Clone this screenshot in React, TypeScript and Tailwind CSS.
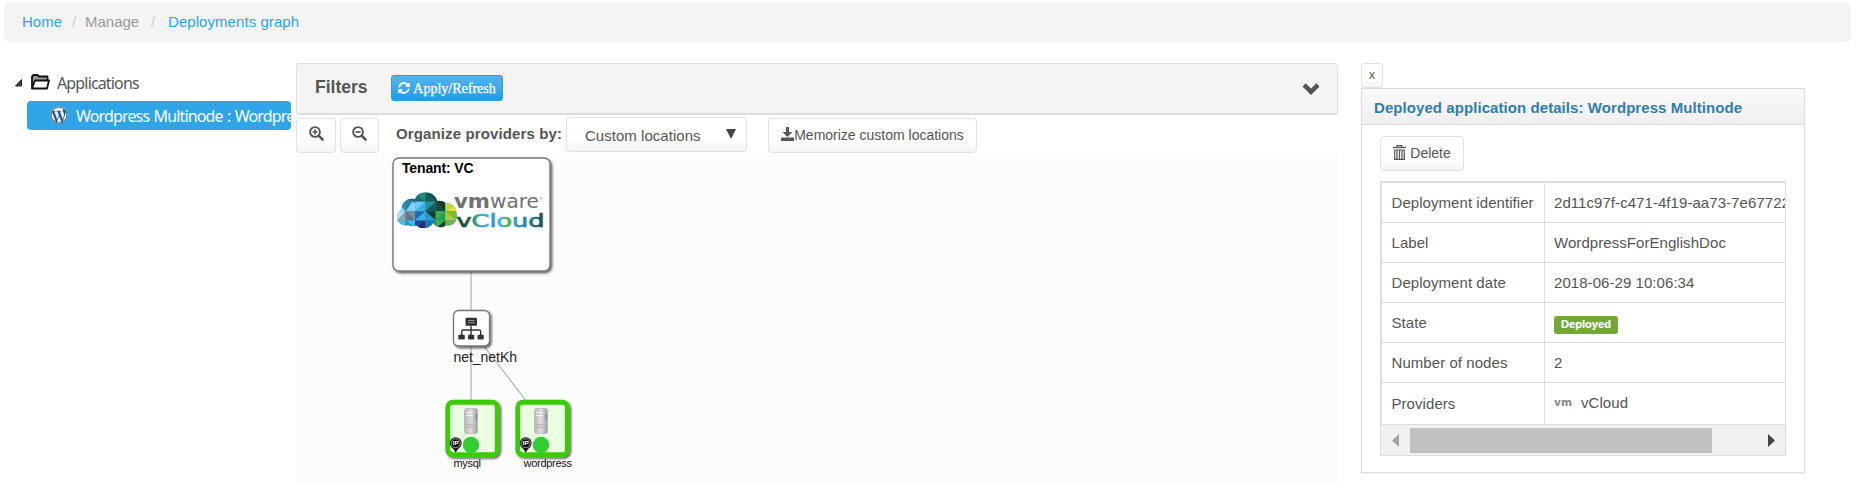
import React, { type ReactNode } from "react";
import { FaWordpress, FaSyncAlt } from "react-icons/fa";

const button =
  "flex items-center justify-center rounded border border-[#e2e2e2] bg-linear-to-b from-white from-60% to-[#f4f4f4] text-[#555]";

function Breadcrumb() {
  return (
    <nav className="ml-1 flex h-10 w-[1847px] items-center rounded-[5px] bg-[#f4f4f4] pl-[18px] text-[15px] leading-5 text-[#999]">
      <span className="w-[50px] text-[#2fa4e7]">Home</span>
      <span className="w-[13px] text-[#ccc]">/</span>
      <span className="w-[66px]">Manage</span>
      <span className="w-[17px] text-[#ccc]">/</span>
      <span className="tracking-[0.06px] text-[#2fa4e7]">Deployments graph</span>
    </nav>
  );
}

function Tree() {
  return (
    <aside className="w-[296px] shrink-0 pt-[9px] font-['Noto_Sans','Open_Sans',sans-serif] text-[16px]">
      <div className="flex h-[22px] items-center pl-[15px] text-[#555]">
        <svg className="mr-[9px] h-2 w-[7px]" viewBox="0 0 7 8">
          <path d="M6.500 .5V7H.5z" fill="#444" stroke="#222" />
        </svg>
        <svg className="mr-[7px] -mt-[2px] h-4 w-[19px]" viewBox="0 0 19 16">
          <path d="M1 14V2.500L2.500 1h4L8 2.500h8.500V6" fill="#999" stroke="#111" strokeWidth="1.800" strokeLinejoin="round" />
          <path d="M1 14.500L4 6.500h14L16 14.500z" fill="#fff" stroke="#111" strokeWidth="1.800" strokeLinejoin="round" />
        </svg>
        <span className="tracking-[-0.85px]">Applications</span>
      </div>
      <div className="ml-[27px] mt-[7px] flex h-[29px] w-[264px] items-center overflow-hidden rounded bg-[#2fa4e7] pl-[23px] whitespace-nowrap text-white">
        <span className="mr-2 mb-[2px] flex h-[18px] w-[18px] shrink-0 items-center justify-center rounded-full bg-[#21597d]">
          <FaWordpress className="h-[18px] w-[18px] text-[#e8f0f5]" />
        </span>
        <span className="tracking-[-0.85px] [word-spacing:1px]">Wordpress Multinode : WordpressForEnglishDoc</span>
      </div>
    </aside>
  );
}

function Magnifier({ plus }: { plus?: boolean }) {
  return (
    <svg className="mb-1 h-[15px] w-[15px]" viewBox="0 0 15 15" fill="none" stroke="#555">
      <circle cx="6" cy="6" r="4.900" strokeWidth="1.900" />
      <path d="M9.700 9.700L13.500 13.500" strokeWidth="2.600" strokeLinecap="round" />
      <path d={plus ? "M3.500 6h5M6 3.500v5" : "M3.500 6h5"} strokeWidth="1.700" />
    </svg>
  );
}

function Filters() {
  return (
    <div className="flex h-[52px] items-center rounded border border-b-2 border-[#ddd] bg-[#f4f4f4] pl-[18px]">
      <h4 className="w-[76px] pb-[3px] text-[17.5px] font-bold text-[#555]">Filters</h4>
      <button className="mb-[1px] flex h-[26px] w-[112px] items-center justify-center gap-[3px] rounded-[3px] border border-[#2a9ddf] bg-linear-to-b from-[#54b4eb] to-[#1d9ce5] font-['Liberation_Serif',serif] text-[14px] text-white [-webkit-text-stroke:0.25px_white]">
        <FaSyncAlt className="h-3 w-3" />
        Apply/Refresh
      </button>
      <svg className="mr-[17px] ml-auto h-3 w-[18px]" viewBox="0 0 18 12">
        <path d="M.5 3.500L3.700 .3 9 5.400 14.300 .3 17.500 3.500 9 12z" fill="#555" />
      </svg>
    </div>
  );
}

function Toolbar() {
  return (
    <div className="flex h-[38px] pt-[2px] text-[15px] text-[#555]">
      <button className={`${button} mt-[1px] h-[35px] w-10`}><Magnifier plus /></button>
      <button className={`${button} mt-[1px] ml-1 h-[35px] w-[39px]`}><Magnifier /></button>
      <label className="ml-[17px] w-[170px] pt-[7px] leading-5 font-bold tracking-[0.12px] whitespace-nowrap">Organize providers by:</label>
      <div className="flex h-[35px] w-[181px] items-center justify-between rounded border border-[#e2e2e2] bg-linear-to-b from-white from-60% to-[#f4f4f4] pt-[3px] pr-2.5 pl-[18px] tracking-[0.03px]">
        Custom locations
        <svg className="mb-[5px] h-2.5 w-2.5" viewBox="0 0 10 10"><path d="M0 0h10L5 10z" fill="#444" /></svg>
      </div>
      <button className={`${button} mt-[1px] ml-[21px] h-[35px] w-[209px] text-[14px] whitespace-nowrap`}>
        <svg className="mb-1 h-[14px] w-[13px]" viewBox="0 0 13 14">
          <path d="M5 0h3v5h3.500L6.500 10 1.500 5H5zM0 10.500h13V14H0z" fill="#555" />
        </svg>
        <span>Memorize custom locations</span>
      </button>
    </div>
  );
}

const facets: [string, string][] = [
  ["13,52 40,52 40,80", "#2f8fb5"], ["13,52 13,80 40,80", "#8fd3f5"],
  ["40,35 67,52 40,80", "#2b7fa6"], ["67,40 67,80 40,80", "#7fd0fb"], ["40,38 70,38 67,56", "#256b83"],
  ["67,23 97,23 97,52", "#1e8a80"], ["67,23 67,52 97,52", "#1d6f70"], ["97,20 97,52 127,52", "#1b5f58"], ["97,20 130,20 127,52", "#174b47"],
  ["67,52 97,52 67,80", "#6cc8f8"], ["97,52 97,80 67,80", "#3eaee9"],
  ["97,52 127,52 97,80", "#2393a0"], ["127,52 127,80 97,80", "#0f5f5d"],
  ["127,38 155,38 155,60", "#216747"], ["127,38 127,80 155,80", "#1d4a3a"], ["127,45 155,52 155,80", "#16392f"],
  ["155,52 190,52 155,80", "#c6dc38"], ["190,52 190,80 155,80", "#d7e43a"],
  ["13,80 40,80 13,110", "#b5dff5"], ["40,80 40,110 13,110", "#88a4b4"],
  ["40,80 67,80 67,108", "#798d9b"], ["40,80 40,110 67,108", "#5f7482"],
  ["67,80 97,80 67,108", "#1870b4"], ["97,80 97,108 67,108", "#3bb0e8"],
  ["97,80 127,80 127,108", "#144033"], ["97,80 97,108 127,108", "#2897d1"],
  ["127,80 155,80 127,108", "#3eae45"], ["155,80 155,108 127,108", "#1fa351"],
  ["155,80 190,80 190,108", "#6dc144"], ["155,80 155,108 190,108", "#a7cc36"],
  ["13,110 40,110 40,132", "#4fbdf1"], ["40,108 67,108 67,132", "#46b6ee"], ["40,108 40,132 67,132", "#218bc5"],
  ["67,108 97,108 67,132", "#1b4c94"], ["97,108 97,132 67,132", "#35206b"],
  ["97,108 127,108 97,132", "#1778b6"], ["127,108 127,132 97,132", "#197c7d"],
  ["127,108 155,108 127,132", "#49ae3c"], ["155,108 155,132 127,132", "#183e34"],
  ["155,108 190,108 155,132", "#6fb83e"],
];

function VCloudLogo() {
  return (
    <g>
      <g transform="translate(392 184.500) scale(.344 .3333)">
        <clipPath id="cloud">
          <circle cx="39" cy="98" r="25" />
          <circle cx="57" cy="72" r="29" />
          <circle cx="98" cy="57" r="34" />
          <circle cx="138" cy="76" r="27" />
          <circle cx="162" cy="82" r="25" />
          <circle cx="163" cy="97" r="26" />
          <circle cx="142" cy="103" r="25" />
          <circle cx="92" cy="99" r="32" />
          <circle cx="60" cy="99" r="26" />
        </clipPath>
        <g clipPath="url(#cloud)">
          <rect x="10" y="20" width="180" height="115" fill="#2b91b8" />
          {facets.map(([points, fill]) => (
            <polygon key={points} points={points} fill={fill} />
          ))}
        </g>
      </g>
      <g fontFamily="DejaVu Sans, sans-serif" fontSize="20">
        <text x="454" y="208" textLength="36" lengthAdjust="spacingAndGlyphs" fontWeight="bold" fill="#717074">vm</text>
        <text x="490" y="208" textLength="49" lengthAdjust="spacingAndGlyphs" fill="#717074">ware</text>
        <circle cx="541" cy="198" r=".8" fill="#717074" />
        <text x="456.500" y="226.500" fontSize="18" textLength="88" lengthAdjust="spacingAndGlyphs" fill="url(#wordmark)" stroke="url(#wordmark)" strokeWidth=".7">vCloud</text>
      </g>
    </g>
  );
}

function NetworkNode() {
  return (
    <g>
      <rect x="453.500" y="310.500" width="36" height="35.500" rx="5" fill="#fff" stroke="#777" strokeWidth="1.300" filter="url(#shadow)" />
      <g fill="#333">
        <rect x="465.500" y="317.700" width="11.500" height="8" rx="1" />
        <path d="M468 320.500h6.500M468 322.700h6.500" stroke="#aaa" strokeWidth=".8" />
        <path d="M471 325.500v10M461.700 335v-3.500q0-1.500 1.500-1.500h16q1.500 0 1.500 1.500v3.500" fill="none" stroke="#333" strokeWidth="1.400" />
        <rect x="458.300" y="334.800" width="6.500" height="4.800" rx="1" />
        <rect x="468" y="334.800" width="6.300" height="4.800" rx="1" />
        <rect x="477.500" y="334.800" width="6.300" height="4.800" rx="1" />
      </g>
    </g>
  );
}

function ServerNode({ x, label, labelWidth }: { x: number; label: string; labelWidth: number }) {
  return (
    <g transform={`translate(${x} 400)`}>
      <rect x="2.250" y="2.250" width="49.500" height="52.500" rx="5" fill="#eaffe2" stroke="#3bcc04" strokeWidth="4.800" filter="url(#shadow)" />
      <rect x="19" y="8.500" width="13" height="25" rx="2" fill="url(#server)" stroke="#aaa" strokeWidth=".6" />
      <path d="M20.500 12.500h7M20.500 15.500h7" stroke="#f4f4f4" strokeWidth="1" />
      <path d="M20.500 24.500h7M20.500 27h7" stroke="#999" strokeWidth=".6" />
      <path d="M30.800 14v6" stroke="#5b8fd6" strokeWidth="1.200" />
      <path d="M10.200 52.500Q8.500 49 5.900 47.300A5.900 5.900 0 1 1 14.500 47.300Q11.900 49 10.200 52.500z" fill="#111" />
      <circle cx="10.200" cy="43.200" r="4.500" fill="#111" stroke="#ccc" strokeWidth=".7" />
      <text x="7.300" y="45.400" fontSize="6.200" fontWeight="bold" fill="#fff">IP</text>
      <circle cx="25.500" cy="45" r="8.200" fill="#3c3" />
      <text x="8" y="67" fontSize="11" fill="#111" textLength={labelWidth}>{label}</text>
    </g>
  );
}

function Graph() {
  return (
    <svg className="block h-[333px] w-[1042px] bg-[#fcfcfc]" viewBox="296 153 1042 333" fontFamily="Liberation Sans, Arial, sans-serif">
      <defs>
        <filter id="shadow" x="-20%" y="-20%" width="150%" height="150%">
          <feDropShadow dx="1.500" dy="1.500" stdDeviation="1.300" floodColor="#000" floodOpacity=".65" />
        </filter>
        <linearGradient id="server">
          <stop offset="0" stopColor="#b8b8b8" />
          <stop offset=".5" stopColor="#dedede" />
          <stop offset="1" stopColor="#a0a0a0" />
        </linearGradient>
        <linearGradient id="wordmark" gradientUnits="userSpaceOnUse" x1="457" y1="0" x2="543" y2="0">
          <stop offset="0" stopColor="#1c4038" />
          <stop offset=".14" stopColor="#1f5a50" />
          <stop offset=".2" stopColor="#2f9c62" />
          <stop offset=".28" stopColor="#3aa8dc" />
          <stop offset=".42" stopColor="#2f9ad8" />
          <stop offset=".5" stopColor="#49b4e6" />
          <stop offset=".58" stopColor="#53b648" />
          <stop offset=".66" stopColor="#36a3a5" />
          <stop offset=".75" stopColor="#2b8fc0" />
          <stop offset=".88" stopColor="#1e7480" />
          <stop offset="1" stopColor="#1b5050" />
        </linearGradient>
      </defs>
      <path d="M471 271V310M471 346V400M484 346L525.500 400" stroke="#aaa" strokeWidth="1.100" fill="none" />
      <rect x="393" y="158" width="157" height="113" rx="6" fill="#fff" stroke="#777" strokeWidth="1.400" filter="url(#shadow)" />
      <text x="402" y="173" fontSize="14" fontWeight="bold" fill="#000" textLength="71.500">Tenant: VC</text>
      <VCloudLogo />
      <NetworkNode />
      <text x="453.500" y="362" fontSize="14" fill="#222" textLength="63.500">net_netKh</text>
      <ServerNode x={445.5} label="mysql" labelWidth={27.5} />
      <ServerNode x={515.5} label="wordpress" labelWidth={48.5} />
    </svg>
  );
}

function Row({ label, children, className = "h-10" }: { label: string; children: ReactNode; className?: string }) {
  return (
    <div className={`flex border-b border-[#ddd] ${className}`}>
      <div className="flex w-[163px] shrink-0 items-center border-r border-[#ddd] pt-[2px] pl-[9.5px]">{label}</div>
      <div className="flex min-w-0 flex-1 items-center overflow-hidden pt-[2px] pl-[9px]">{children}</div>
    </div>
  );
}

function Details() {
  return (
    <section className="ml-[23px] w-[444px] text-[15px] text-[#555]">
      <button className={`${button} h-[25px] w-[22px] rounded-[3px] pb-[2px] text-[12px]`}>x</button>
      <div className="h-[385px] border border-[#ddd] shadow-[0_1px_2px_rgba(0,0,0,0.05)]">
        <h3 className="flex h-9 items-center border-b border-[#ddd] bg-linear-to-b from-[#fafafa] to-[#efefef] pt-[3px] pl-3 font-bold tracking-[0.07px] text-[#317eac]">
          Deployed application details: Wordpress Multinode
        </h3>
        <button className={`${button} mt-[11px] ml-[18px] h-[35px] w-[84px] gap-1 text-[14px]`}>
          <svg className="mb-[3px] h-[15px] w-[13px]" viewBox="0 0 13 15" fill="none" stroke="#555">
            <path d="M4 2V.7h5V2" strokeWidth="1.200" />
            <path d="M0 2.500h13" strokeWidth="1.300" />
            <path d="M1.700 5v9.300h9.600V5zM4 5v9M6.500 5v9M9 5v9" strokeWidth="1.200" />
          </svg>
          Delete
        </button>
        <div className="mt-2.5 ml-[18px] w-[406px] border border-[#ddd] whitespace-nowrap">
          <div className="h-[243px] border-t border-l border-[#ddd] tracking-[0.06px]">
            <Row label="Deployment identifier">2d11c97f-c471-4f19-aa73-7e677220</Row>
            <Row label="Label">WordpressForEnglishDoc</Row>
            <Row label="Deployment date">2018-06-29 10:06:34</Row>
            <Row label="State">
              <span className="mt-[3px] flex h-[18px] w-16 items-center justify-center rounded-[3px] bg-[#73a839] pb-[1px] text-[11px] font-bold text-white [-webkit-text-stroke:0.2px_white]">
                Deployed
              </span>
            </Row>
            <Row label="Number of nodes">2</Row>
            <Row label="Providers" className="h-[42px]">
              <svg className="mb-[3px] mr-[9px] h-3 w-[18px]" viewBox="0 0 18 12">
                <text x="0" y="9" fontFamily="DejaVu Sans, sans-serif" fontWeight="bold" fontSize="11" fill="#888" textLength="18" lengthAdjust="spacingAndGlyphs">vm</text>
              </svg>
              <span className="mb-[2px]">vCloud</span>
            </Row>
          </div>
          <div className="flex h-[30px] items-center bg-[#f1f1f1] pl-[11px]">
            <svg className="h-[13px] w-[7px]" viewBox="0 0 7 13"><path d="M7 0v13L0 6.500z" fill="#a3a3a3" /></svg>
            <div className="ml-[11px] h-[25px] w-[302px] bg-[#c1c1c1]" />
            <svg className="ml-14 h-[13px] w-[7px]" viewBox="0 0 7 13"><path d="M0 0v13L7 6.500z" fill="#444" /></svg>
          </div>
        </div>
      </div>
    </section>
  );
}

export default function App() {
  return (
    <div className="h-[486px] overflow-hidden bg-white pt-[2px] font-['Liberation_Sans',Arial,sans-serif]">
      <Breadcrumb />
      <div className="mt-[21px] flex items-start">
        <Tree />
        <main className="w-[1042px] shrink-0">
          <Filters />
          <Toolbar />
          <Graph />
        </main>
        <Details />
      </div>
    </div>
  );
}
